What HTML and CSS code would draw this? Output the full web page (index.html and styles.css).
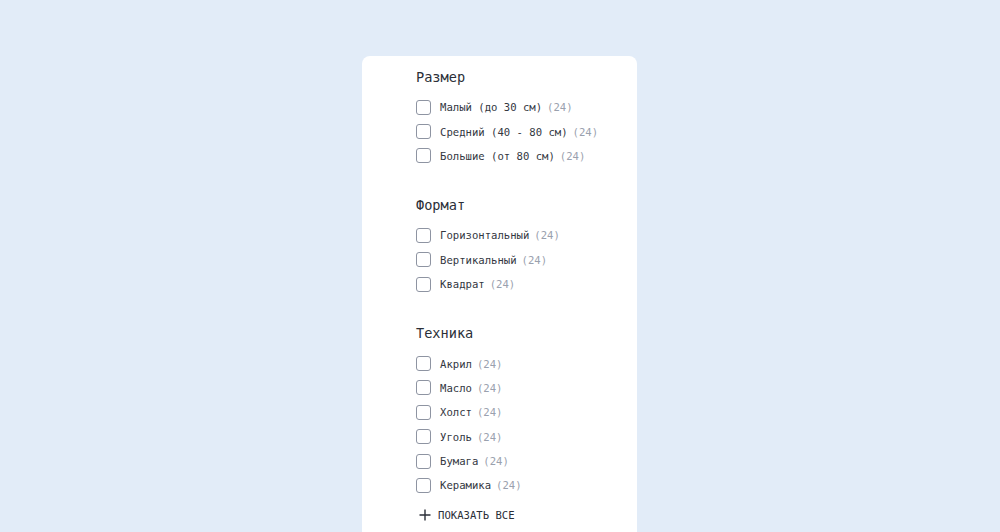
FILE: index.html
```html
<!DOCTYPE html>
<html lang="ru">
<head>
<meta charset="utf-8">
<title>Фильтры</title>
<link rel="stylesheet" href="styles.css">
</head>
<body>
<div class="card">
  <section class="group">
    <h3 class="group-title">Размер</h3>
    <ul class="options">
      <li class="option"><span class="box"></span><span class="label">Малый (до 30 см)</span><span class="count">(24)</span></li>
      <li class="option"><span class="box"></span><span class="label">Средний (40 - 80 см)</span><span class="count">(24)</span></li>
      <li class="option"><span class="box"></span><span class="label">Большие (от 80 см)</span><span class="count">(24)</span></li>
    </ul>
  </section>
  <section class="group">
    <h3 class="group-title">Формат</h3>
    <ul class="options">
      <li class="option"><span class="box"></span><span class="label">Горизонтальный</span><span class="count">(24)</span></li>
      <li class="option"><span class="box"></span><span class="label">Вертикальный</span><span class="count">(24)</span></li>
      <li class="option"><span class="box"></span><span class="label">Квадрат</span><span class="count">(24)</span></li>
    </ul>
  </section>
  <section class="group">
    <h3 class="group-title">Техника</h3>
    <ul class="options">
      <li class="option"><span class="box"></span><span class="label">Акрил</span><span class="count">(24)</span></li>
      <li class="option"><span class="box"></span><span class="label">Масло</span><span class="count">(24)</span></li>
      <li class="option"><span class="box"></span><span class="label">Холст</span><span class="count">(24)</span></li>
      <li class="option"><span class="box"></span><span class="label">Уголь</span><span class="count">(24)</span></li>
      <li class="option"><span class="box"></span><span class="label">Бумага</span><span class="count">(24)</span></li>
      <li class="option"><span class="box"></span><span class="label">Керамика</span><span class="count">(24)</span></li>
    </ul>
    <button class="show-all" type="button">
      <svg class="plus" width="12" height="12" viewBox="0 0 12 12"><path d="M6 0.5V11.5M0.5 6H11.5" stroke="#2b2f38" stroke-width="1.4" fill="none"/></svg>
      <span>ПОКАЗАТЬ ВСЕ</span>
    </button>
  </section>
</div>
</body>
</html>
```
FILE: styles.css
```css
* { box-sizing: border-box; }
html, body { margin: 0; padding: 0; }
body {
  background: #e2ecf8;
  font-family: "DejaVu Sans Mono", "Liberation Mono", monospace;
  color: #2b2f38;
  height: 532px;
  overflow: hidden;
}
.card {
  width: 275px;
  margin: 56px 0 0 362px;
  background: #ffffff;
  border-radius: 8px 8px 0 0;
  padding: 11px 0 0 54px;
  height: 476px;
  display: flex;
  flex-direction: column;
  gap: 27px;
}
.group { display: flex; flex-direction: column; }
.group-title {
  margin: 0;
  font-weight: normal;
  font-size: 13.6px;
  line-height: 20px;
  height: 20px;
  color: #2b2f38;
}
.options {
  list-style: none;
  margin: 8px 0 0;
  padding: 0;
}
.option {
  height: 24.4px;
  display: flex;
  align-items: center;
  font-size: 10.6px;
}
.box {
  width: 15px;
  height: 15px;
  border: 1.5px solid #8e94a2;
  border-radius: 3px;
  flex: none;
  margin-right: 9px;
}
.label { color: #33373f; }
.count { color: #9aa1ae; margin-left: 5px; }
.show-all {
  margin-top: 7px;
  height: 20px;
  padding: 0 0 0 3px;
  border: 0;
  background: none;
  display: flex;
  align-items: center;
  gap: 7px;
  font-family: inherit;
  font-size: 10.6px;
  color: #2b2f38;
  cursor: pointer;
}
.plus { flex: none; }
```
